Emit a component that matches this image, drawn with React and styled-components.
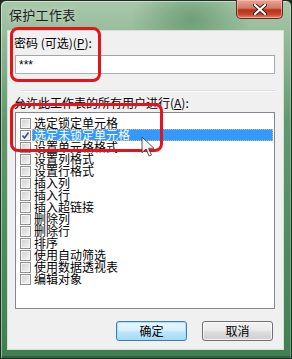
import React from 'react'
import styled, { createGlobalStyle } from 'styled-components'

const GlobalStyle = createGlobalStyle`
  html, body {
    margin: 0;
    padding: 0;
    background: #1d2a1f;
    overflow: hidden;
  }
  body {
    font-family: "Noto Sans CJK SC", "Noto Sans", sans-serif;
  }
`

const items = [
  '选定锁定单元格',
  '选定未锁定单元格',
  '设置单元格格式',
  '设置列格式',
  '设置行格式',
  '插入列',
  '插入行',
  '插入超链接',
  '删除列',
  '删除行',
  '排序',
  '使用自动筛选',
  '使用数据透视表',
  '编辑对象'
]

function App () {
  return (
    <>
      <GlobalStyle />
      <Window>
        <TitleBar>
          <Title>保护工作表</Title>
          <CloseButton>
            <svg width='14' height='11' viewBox='0 0 14 11'>
              <path d='M2 1 L12 10 M12 1 L2 10' stroke='#3a1a14' strokeWidth='4' strokeLinecap='round' />
              <path d='M2 1 L12 10 M12 1 L2 10' stroke='#ffffff' strokeWidth='2.2' strokeLinecap='round' />
            </svg>
          </CloseButton>
        </TitleBar>
        <Panel>
          <Label>密码 (可选)(<u>P</u>):</Label>
          <PasswordBox>***</PasswordBox>
          <Etched />
          <Label $top={5}>允许此工作表的所有用户进行(<u>A</u>):</Label>
          <List>
            {items.map((text, i) => (
              <Row key={text}>
                <Check $checked={i === 1}>
                  {i === 1 && (
                    <svg width='9' height='9' viewBox='0 0 9 9'>
                      <path d='M1.5 4.5 L3.5 7 L7.5 1.5' stroke='#3d4f86' strokeWidth='1.6' fill='none' />
                    </svg>
                  )}
                </Check>
                <ItemText $selected={i === 1}>{text}</ItemText>
              </Row>
            ))}
          </List>
          <Buttons>
            <Button $primary>确定</Button>
            <Button>取消</Button>
          </Buttons>
        </Panel>
        <Callout $left={10} $top={27} $width={91} $height={55} />
        <Callout $left={10} $top={103} $width={153} $height={49} />
        <Cursor>
          <svg width='14' height='22' viewBox='0 0 14 22'>
            <path d='M1 1 L1 17 L5 13 L8 20 L10.5 19 L7.6 12.3 L13 12.3 Z' fill='#f4f4f4' stroke='#3c3c3c' strokeWidth='1' strokeLinejoin='round' />
          </svg>
        </Cursor>
      </Window>
    </>
  )
}

const Window = styled.div`
  position: relative;
  box-sizing: border-box;
  width: 292px;
  height: 359px;
  border: 1px solid #1f2f22;
  border-radius: 6px 6px 0 0;
  padding: 0 7px 8px 6px;
  background:
    radial-gradient(ellipse 60px 40px at 190px 18px, rgba(70, 130, 85, 0.55), transparent),
    linear-gradient(180deg, #a9c8ab 0px, #98bd9c 30px, #5f9a6c 120px, #3f7f4f 359px);
  box-shadow:
    inset 1px 1px 0 rgba(255, 255, 255, 0.45),
    inset -1px 0 0 rgba(255, 255, 255, 0.25),
    inset 0 -2px 0 rgba(20, 50, 28, 0.35);
`

const TitleBar = styled.div`
  display: flex;
  justify-content: space-between;
  align-items: flex-start;
  height: 29px;
`

const Title = styled.div`
  padding: 6px 0 0 2px;
  font-size: 13px;
  line-height: 16px;
  letter-spacing: 0.3px;
  color: #1c1c1c;
  text-shadow: 0 0 6px rgba(255, 255, 255, 0.7);
`

const CloseButton = styled.div`
  display: flex;
  align-items: center;
  justify-content: center;
  box-sizing: border-box;
  width: 47px;
  height: 19px;
  margin: -1px 1px 0 0;
  border: 1px solid #5e2a22;
  border-top: none;
  border-radius: 0 0 5px 5px;
  background: linear-gradient(180deg, #e8a595 0%, #d37a66 45%, #b7321b 55%, #c9442a 80%, #e08770 100%);
  box-shadow: inset 0 0 0 1px rgba(255, 210, 200, 0.5);
`

const Panel = styled.div`
  box-sizing: border-box;
  height: 320px;
  border: 1px solid #d4e2d6;
  background: #f0f0f0;
  padding: 5px 0 0 0;
  display: flex;
  flex-direction: column;
`

const Label = styled.div`
  margin: ${p => p.$top || 0}px 0 0 6px;
  font-size: 12px;
  line-height: 14px;
  color: #000;
  u { text-decoration: underline; }
`

const PasswordBox = styled.div`
  box-sizing: border-box;
  width: 260px;
  height: 19px;
  margin: 5px 0 0 7px;
  border: 1px solid #abadb3;
  border-top-color: #a3a5ab;
  background: #fff;
  padding: 0 3px;
  font-family: "Liberation Sans", sans-serif;
  font-size: 12px;
  line-height: 19px;
  color: #000;
`

const Etched = styled.div`
  width: 255px;
  height: 1px;
  margin: 16px 0 0 13px;
  background: #d5dfe5;
  box-shadow: 0 1px 0 #fff;
`

const List = styled.div`
  box-sizing: border-box;
  width: 260px;
  height: 197px;
  margin: 2px 0 0 7px;
  padding-top: 4px;
  border: 1px solid #828790;
  background: #fff;
  display: flex;
  flex-direction: column;
`

const Row = styled.div`
  display: flex;
  align-items: center;
  height: 12px;
`

const Check = styled.div`
  box-sizing: border-box;
  flex: none;
  display: flex;
  align-items: center;
  justify-content: center;
  width: 11px;
  height: 11px;
  margin-left: 4px;
  border: 1px solid #8f8f8f;
  background: ${p => p.$checked
    ? 'linear-gradient(135deg, #f4f4f4, #e6e6e6)'
    : 'linear-gradient(135deg, #cfcfcf 0%, #e2e2e2 50%, #f6f6f6 100%)'};
  box-shadow: inset 0 0 0 1px #f4f4f4;
`

const ItemText = styled.div`
  box-sizing: border-box;
  flex: 1;
  height: 12px;
  margin: 0 1px 0 1px;
  padding-left: 2px;
  font-size: 12px;
  line-height: 12px;
  color: ${p => p.$selected ? '#fff' : '#000'};
  background: ${p => p.$selected ? '#3399ff' : 'transparent'};
  outline: ${p => p.$selected ? '1px dotted #e8b860' : 'none'};
  outline-offset: -1px;
  white-space: nowrap;
`

const Buttons = styled.div`
  display: flex;
  justify-content: flex-end;
  gap: 15px;
  margin: 12px 10px 0 0;
`

const Button = styled.div`
  box-sizing: border-box;
  width: 71px;
  height: 20px;
  border: 1px solid ${p => p.$primary ? '#3c7fb1' : '#707070'};
  border-radius: 3px;
  background: ${p => p.$primary
    ? 'linear-gradient(180deg, #eaf6fd 0%, #d9f0fc 45%, #bee6fd 55%, #a7d9f5 100%)'
    : 'linear-gradient(180deg, #f2f2f2 0%, #ebebeb 45%, #dddddd 55%, #cfcfcf 100%)'};
  box-shadow: inset 0 0 0 1px ${p => p.$primary ? 'rgba(150, 220, 255, 0.8)' : 'rgba(255, 255, 255, 0.7)'};
  font-size: 12px;
  line-height: 18px;
  text-align: center;
  color: #000;
`

const Callout = styled.div`
  position: absolute;
  box-sizing: border-box;
  left: ${p => p.$left - 1}px;
  top: ${p => p.$top - 1}px;
  width: ${p => p.$width}px;
  height: ${p => p.$height}px;
  border: 3px solid #e3141c;
  border-radius: 8px;
  pointer-events: none;
`

const Cursor = styled.div`
  position: absolute;
  left: 140px;
  top: 135px;
  line-height: 0;
  opacity: 0.85;
`

export default App
